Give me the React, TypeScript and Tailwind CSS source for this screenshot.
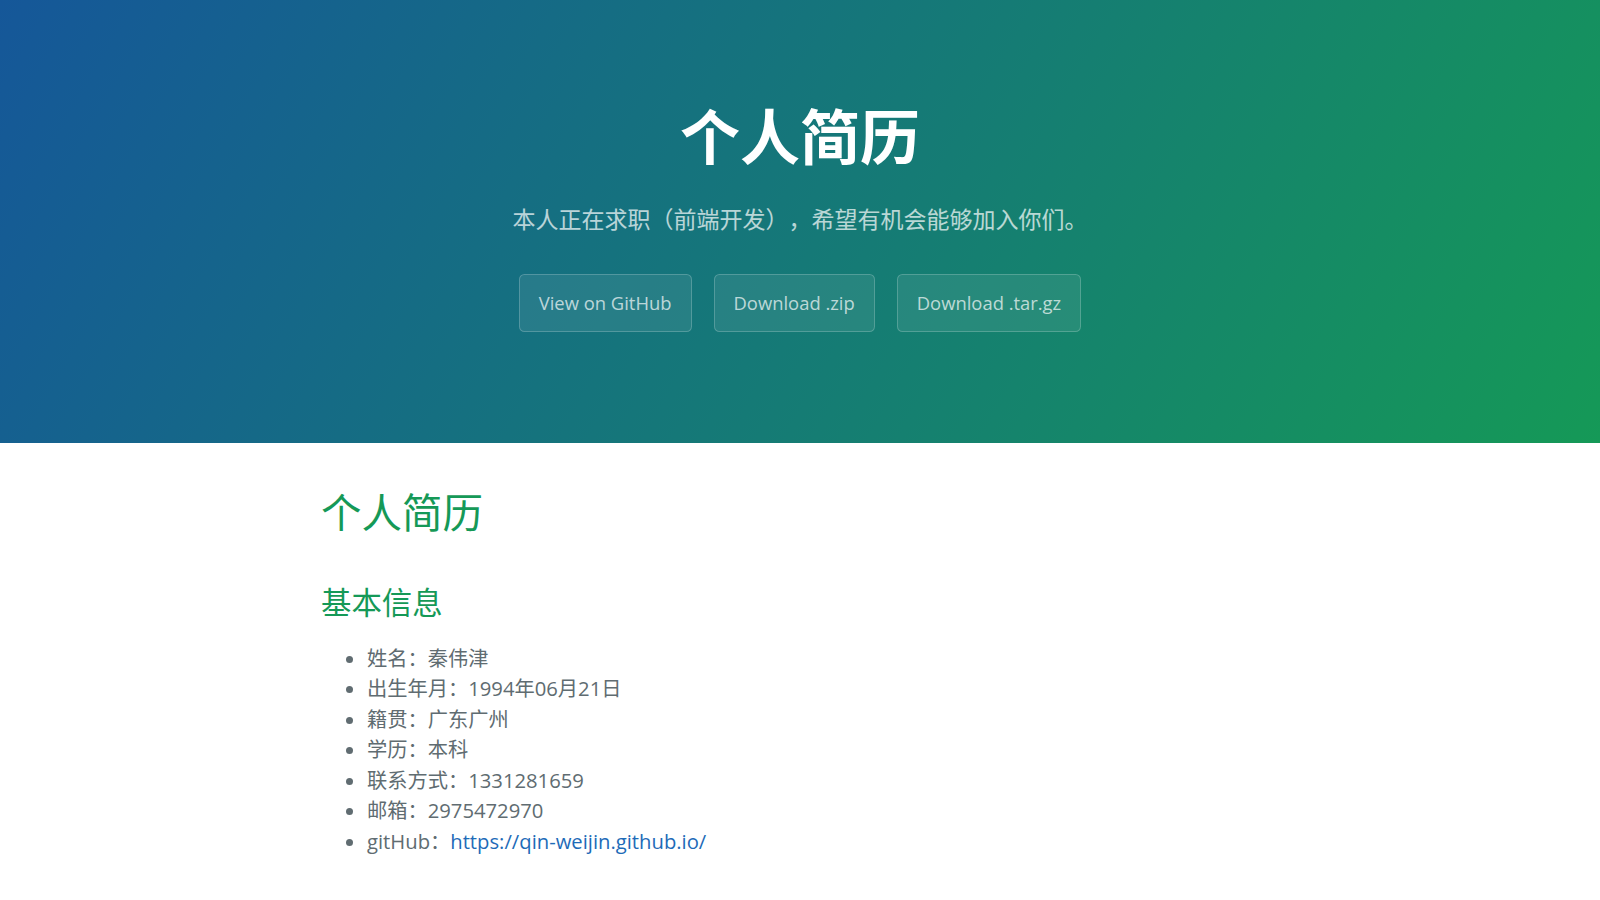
import React from "react";

const font = "font-['Open_Sans','Noto_Sans_CJK_SC',sans-serif]";

export default function App() {
  const items: [string, React.ReactNode][] = [
    ["姓名：", "秦伟津"],
    ["出生年月：", "1994年06月21日"],
    ["籍贯：", "广东广州"],
    ["学历：", "本科"],
    ["联系方式：", "1331281659"],
    ["邮箱：", "2975472970"],
    [
      "gitHub：",
      <a key="l" href="#" className="text-[#1e6bb8] no-underline">
        https://qin-weijin.github.io/
      </a>,
    ],
  ];
  return (
    <div className={`${font} min-h-screen bg-white [text-spacing-trim:space-all]`}>
      <header className="bg-[linear-gradient(120deg,#155799,#159957)] text-white text-center pt-[92px] pb-[111px]">
        <h1 className="text-[60px] leading-[90px] font-bold m-0">个人简历</h1>
        <h2 className="text-[23px] leading-[34.5px] font-normal opacity-70 mt-[20px] mb-[37px]">
          本人正在求职（前端开发），希望有机会能够加入你们。
        </h2>
        <div className="flex justify-center gap-[22px]">
          {["View on GitHub", "Download .zip", "Download .tar.gz"].map((t) => (
            <a
              key={t}
              href="#"
              className="block px-[19px] py-[14px] text-[18.4px] leading-[28.5px] text-white/70 bg-white/[0.08] border border-white/20 rounded-[5.5px]"
            >
              {t}
            </a>
          ))}
        </div>
      </header>
      <main className="max-w-[1178px] mx-auto px-[110px] pt-[40px] text-[20.24px] leading-[1.5] text-[#606c71]">
        <h1 className="text-[40.5px] leading-[60px] font-normal text-[#159957] mb-[18px]">个人简历</h1>
        <h2 className="text-[30.4px] leading-[45.5px] font-normal text-[#159957] mt-[37px] mb-[17px]">基本信息</h2>
        <ul className="list-disc pl-[46px] mb-[18px]">
          {items.map(([k, v], i) => (
            <li key={i} className="leading-[30.6px]">
              {k}
              {v}
            </li>
          ))}
        </ul>
        <h2 className="text-[30.4px] leading-[45.5px] font-normal text-[#159957] mt-[40px] mb-[18px]">专业技能</h2>
      </main>
    </div>
  );
}
